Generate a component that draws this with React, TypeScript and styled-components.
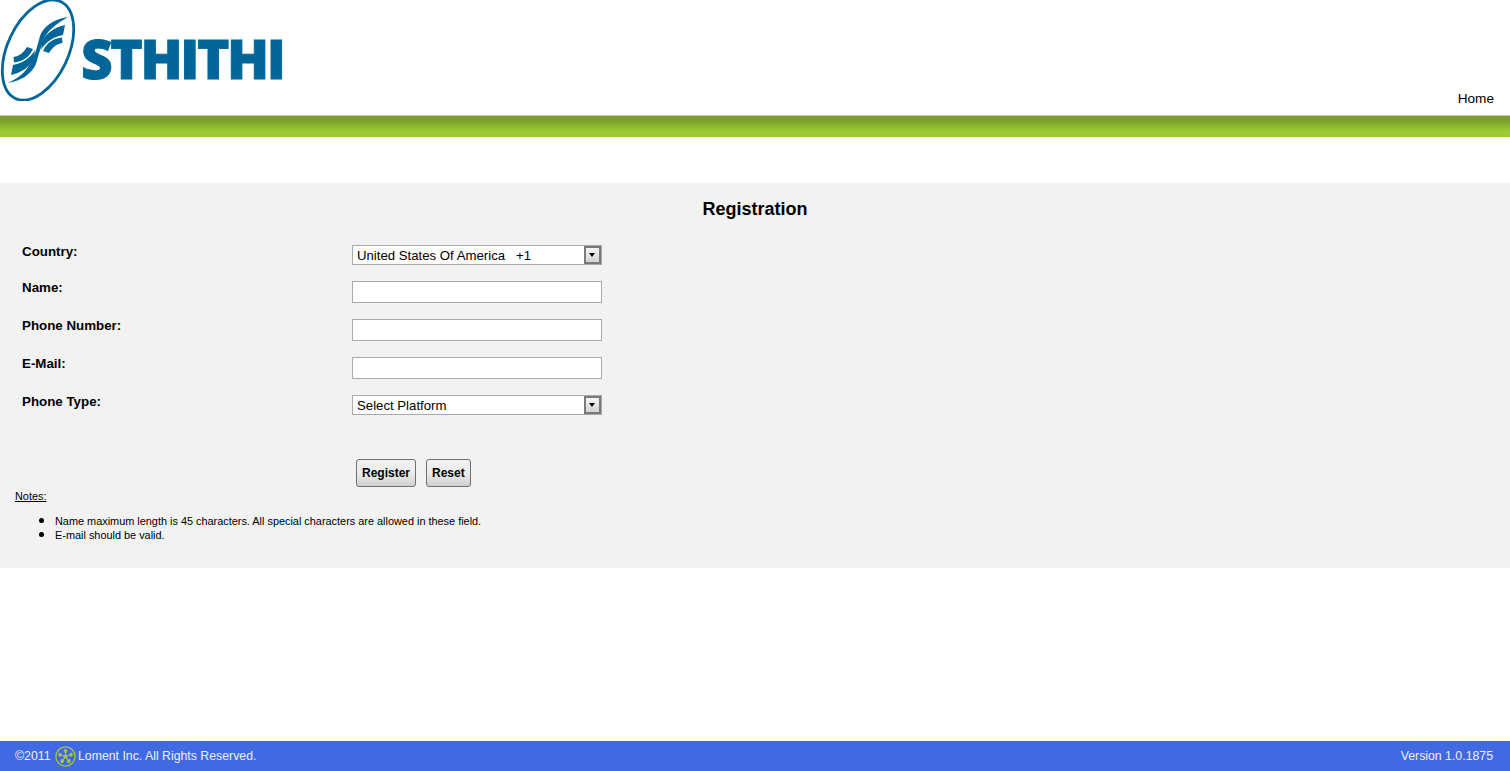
import React from "react";
import styled, { createGlobalStyle } from "styled-components";

const GlobalStyle = createGlobalStyle`
    html, body {
        margin: 0;
        padding: 0;
        background: #ffffff;
        font-family: "Liberation Sans", Arial, sans-serif;
    }
`;

const Page = styled.div`
    display: flex;
    flex-direction: column;
    height: 771px;
    overflow: hidden;
`;

const Header = styled.header`
    display: flex;
    justify-content: space-between;
    align-items: flex-end;
    height: 115px;
    padding-right: 16px;
    border-bottom: 1px solid #c4c4c4;
`;

const Brand = styled.div`
    display: flex;
    align-self: flex-start;
    height: 101px;
`;

const BrandName = styled.span`
    margin: 24px 0 0 5px;
    width: 201px;
    color: #006699;
    font-family: "Open Sans", "Liberation Sans", sans-serif;
    font-size: 55px;
    font-weight: 800;
    line-height: 68px;
    letter-spacing: -2.4px;
    -webkit-text-stroke: 0.9px #006699;
`;

const HomeLink = styled.a`
    margin-bottom: 8px;
    color: #000000;
    font-size: 13.6px;
    line-height: 16px;
`;

const GreenBar = styled.div`
    height: 21px;
    background: linear-gradient(#7a9f2a 0, #7a9f2a 4px, #9acb32 15px, #9acb32 100%);
`;

const Panel = styled.main`
    margin-top: 46px;
    height: 385px;
    background: #f2f2f2;
`;

const Title = styled.h1`
    margin: 0;
    padding-top: 15px;
    height: 62px;
    box-sizing: border-box;
    color: #000000;
    font-size: 18px;
    font-weight: bold;
    line-height: 22px;
    text-align: center;
`;

const Form = styled.form`
    display: flex;
    flex-direction: column;
    padding-left: 22px;
`;

const Row = styled.div<{ $height: number }>`
    display: grid;
    grid-template-columns: 330px 250px;
    height: ${(p) => p.$height}px;
`;

const Label = styled.label`
    margin-top: -1px;
    color: #000000;
    font-size: 13.33px;
    font-weight: bold;
    line-height: 16px;
`;

const SelectBox = styled.div`
    position: relative;
    height: 20px;
    box-sizing: border-box;
    border: 1px solid #a9a9a9;
    background: #ffffff;
`;

const SelectField = styled.select`
    display: block;
    width: 100%;
    height: 18px;
    padding: 1px 0 0 4px;
    border: 0;
    outline: 0;
    background: transparent;
    appearance: none;
    color: #000000;
    font-family: "Liberation Sans", Arial, sans-serif;
    font-size: 13.2px;
    line-height: 18px;
    white-space: pre;
`;

const SelectArrow = styled.span`
    position: absolute;
    top: 0;
    right: 0;
    width: 17px;
    height: 18px;
    box-sizing: border-box;
    border: 2px solid #7a7a7a;
    background: linear-gradient(#f6f6f6, #d2d2d2);
    pointer-events: none;

    &::after {
        content: "";
        position: absolute;
        top: 5px;
        left: 3px;
        border-top: 4px solid #000000;
        border-left: 3.5px solid transparent;
        border-right: 3.5px solid transparent;
    }
`;

const TextField = styled.input`
    display: block;
    width: 250px;
    height: 22px;
    padding: 0 4px;
    box-sizing: border-box;
    border: 1px solid #a9a9a9;
    background: #ffffff;
    outline: 0;
`;

const Buttons = styled.div`
    display: flex;
    gap: 10px;
    margin: 44px 0 0 334px;
`;

const Button = styled.button`
    height: 28px;
    padding: 0 5px;
    box-sizing: border-box;
    border: 1px solid #707070;
    border-radius: 3px;
    background: linear-gradient(#f2f2f2 0, #ebebeb 50%, #d0d0d0 100%);
    color: #000000;
    font-family: "Liberation Sans", Arial, sans-serif;
    font-size: 12px;
    font-weight: bold;
`;

const Notes = styled.section`
    padding: 3px 0 0 15px;
    color: #000000;
    font-size: 10.9px;
    line-height: 13px;
`;

const NotesTitle = styled.u`
    display: block;
    height: 23px;
`;

const NotesList = styled.ul`
    margin: 0;
    padding: 0 0 0 40px;

    li {
        height: 14px;
    }

    li::marker {
        font-size: 16px;
    }
`;

const Footer = styled.footer`
    display: flex;
    justify-content: space-between;
    align-items: center;
    margin-top: auto;
    height: 30px;
    padding: 0 17px 0 15px;
    background: #4169e1;
    color: #eef1fc;
    font-size: 12.3px;
`;

const Copyright = styled.div`
    display: flex;
    align-items: center;
    gap: 2px;
`;

const Year = styled.span`
    width: 38px;
`;

function LogoMark() {
    const fan = (
        <g fill="#006699">
            <path d="M65 25 C55 27 46 33 42 42 L41 50 C44 44 52 37 63 35 Z" />
            <path d="M62 37.5 C54 38.5 47 42 43 51 L49 53 C52 48 56 44 62.5 43 Z" />
        </g>
    );
    return (
        <svg width="76" height="101" viewBox="0 0 76 101" aria-hidden="true">
            <ellipse cx="38" cy="50" rx="30.5" ry="53.4" transform="rotate(25 38 50)" fill="none" stroke="#006699" strokeWidth="2.8" />
            <path
                d="M68 17 C55 19 44 25 40 36 C37 47 34 60 26 70 C21 76 14 80 8 83 C20 81 31 75 36 64 C39 53 41 47 44 39 C47 31 56 24 68 17 Z"
                fill="#006699"
            />
            {fan}
            <g transform="rotate(180 38 50)">{fan}</g>
        </svg>
    );
}

function LomentMark() {
    const spokes = [0, 72, 144, 216, 288];
    return (
        <svg width="21" height="21" viewBox="0 0 21 21" aria-hidden="true">
            <circle cx="10.5" cy="10.5" r="9.6" fill="none" stroke="#a4c639" strokeWidth="1.3" />
            {spokes.map((angle) => (
                <g key={angle} transform={`rotate(${angle} 10.5 10.5)`}>
                    <line x1="10.5" y1="10.5" x2="10.5" y2="5" stroke="#a4c639" strokeWidth="1.2" />
                    <circle cx="10.5" cy="4.8" r="1.9" fill="#a4c639" />
                </g>
            ))}
            <circle cx="10.5" cy="10.5" r="2" fill="#a4c639" />
        </svg>
    );
}

export default function App() {
    return (
        <Page>
            <GlobalStyle />
            <Header>
                <Brand>
                    <LogoMark />
                    <BrandName>STHITHI</BrandName>
                </Brand>
                <HomeLink>Home</HomeLink>
            </Header>
            <GreenBar />
            <Panel>
                <Title>Registration</Title>
                <Form>
                    <Row $height={36}>
                        <Label>Country:</Label>
                        <SelectBox>
                            <SelectField defaultValue="us">
                                <option value="us">United States Of America &nbsp; +1</option>
                            </SelectField>
                            <SelectArrow />
                        </SelectBox>
                    </Row>
                    <Row $height={38}>
                        <Label>Name:</Label>
                        <TextField />
                    </Row>
                    <Row $height={38}>
                        <Label>Phone Number:</Label>
                        <TextField />
                    </Row>
                    <Row $height={38}>
                        <Label>E-Mail:</Label>
                        <TextField />
                    </Row>
                    <Row $height={20}>
                        <Label>Phone Type:</Label>
                        <SelectBox>
                            <SelectField defaultValue="">
                                <option value="">Select Platform</option>
                            </SelectField>
                            <SelectArrow />
                        </SelectBox>
                    </Row>
                    <Buttons>
                        <Button type="button">Register</Button>
                        <Button type="button">Reset</Button>
                    </Buttons>
                </Form>
                <Notes>
                    <NotesTitle>Notes:</NotesTitle>
                    <NotesList>
                        <li>Name maximum length is 45 characters. All special characters are allowed in these field.</li>
                        <li>E-mail should be valid.</li>
                    </NotesList>
                </Notes>
            </Panel>
            <Footer>
                <Copyright>
                    <Year>©2011</Year>
                    <LomentMark />
                    <span>Loment Inc. All Rights Reserved.</span>
                </Copyright>
                <span>Version 1.0.1875</span>
            </Footer>
        </Page>
    );
}
